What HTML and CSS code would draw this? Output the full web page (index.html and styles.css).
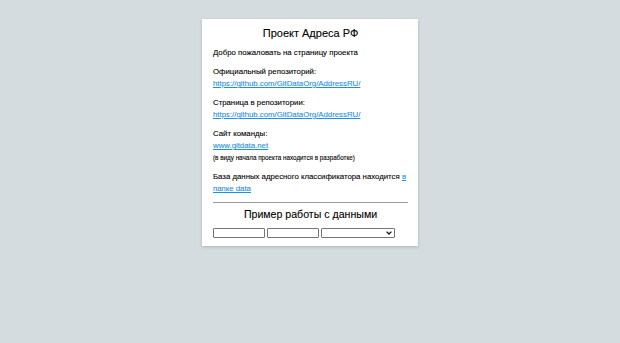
FILE: index.html
```html
<!DOCTYPE html>
<html lang="ru">
<head>
<meta charset="utf-8">
<title>Проект Адреса РФ</title>
<link rel="stylesheet" href="styles.css">
</head>
<body>
<div class="card">
  <h1 class="title">Проект Адреса РФ</h1>
  <div class="paras">
    <p class="para">Добро пожаловать на страницу проекта</p>
    <p class="para">Официальный репозиторий:<br><a class="link" href="#">https://github.com/GitDataOrg/AddressRU/</a></p>
    <p class="para">Страница в репозитории:<br><a class="link" href="#">https://github.com/GitDataOrg/AddressRU/</a></p>
    <p class="para">Сайт команды:<br><a class="link" href="#">www.gitdata.net</a><br><span class="note">(в виду начала проекта находится в разработке)</span></p>
    <p class="para">База данных адресного классификатора находится <a class="link" href="#">в папке data</a></p>
  </div>
  <hr class="rule">
  <h2 class="subtitle">Пример работы с данными</h2>
  <div class="controls">
    <input class="field" type="text">
    <input class="field" type="text">
    <span class="select-wrap">
      <select class="select"><option></option></select>
      <svg class="chevron" width="6" height="4" viewBox="0 0 6 4"><path d="M0.6 0.6 L3 3 L5.4 0.6" fill="none" stroke="#111" stroke-width="1.3"/></svg>
    </span>
  </div>
</div>
</body>
</html>
```

FILE: styles.css
```css
html, body {
  margin: 0;
  padding: 0;
}
body {
  background: #d4dcdf;
  font-family: "Liberation Sans", Arial, sans-serif;
  color: #000;
  height: 343px;
}
.card {
  box-sizing: border-box;
  width: 216px;
  margin: 19px auto 0;
  background: #fff;
  padding: 7px 10px 8px 11px;
  box-shadow: 0 1px 3px rgba(0, 0, 0, 0.18);
}
.title {
  font-size: 11px;
  font-weight: normal;
  line-height: 14px;
  text-align: center;
  margin: 0 0 7px;
  -webkit-text-stroke: 0.1px #000;
}
.paras {
  display: flex;
  flex-direction: column;
  gap: 7px;
}
.para {
  font-size: 7.8px;
  line-height: 12px;
  margin: 0;
  font-weight: normal;
  -webkit-text-stroke: 0.1px #000;
}
.link {
  color: #1e8fe6;
  text-decoration: underline;
  -webkit-text-stroke: 0.1px #1e8fe6;
}
.note {
  font-size: 6.3px;
}
.rule {
  border: 0;
  border-top: 1px solid #9a9a9a;
  margin: 7px 0 4px;
  height: 0;
}
.subtitle {
  font-size: 10.6px;
  font-weight: normal;
  line-height: 14px;
  text-align: center;
  margin: 0 0 7px;
  -webkit-text-stroke: 0.1px #000;
}
.controls {
  display: flex;
  gap: 2px;
  align-items: center;
}
.field {
  box-sizing: border-box;
  width: 52px;
  height: 10px;
  margin: 0;
  padding: 0;
  border: 1px solid #767676;
  border-radius: 1px;
  font-size: 7px;
}
.select-wrap {
  position: relative;
  display: block;
  width: 74px;
  height: 10px;
}
.select {
  -webkit-appearance: none;
  appearance: none;
  box-sizing: border-box;
  width: 74px;
  height: 10px;
  margin: 0;
  padding: 0;
  border: 1px solid #767676;
  border-radius: 1px;
  background: #fff;
  font-size: 6px;
  display: block;
}
.chevron {
  position: absolute;
  right: 3px;
  top: 3px;
}
```
